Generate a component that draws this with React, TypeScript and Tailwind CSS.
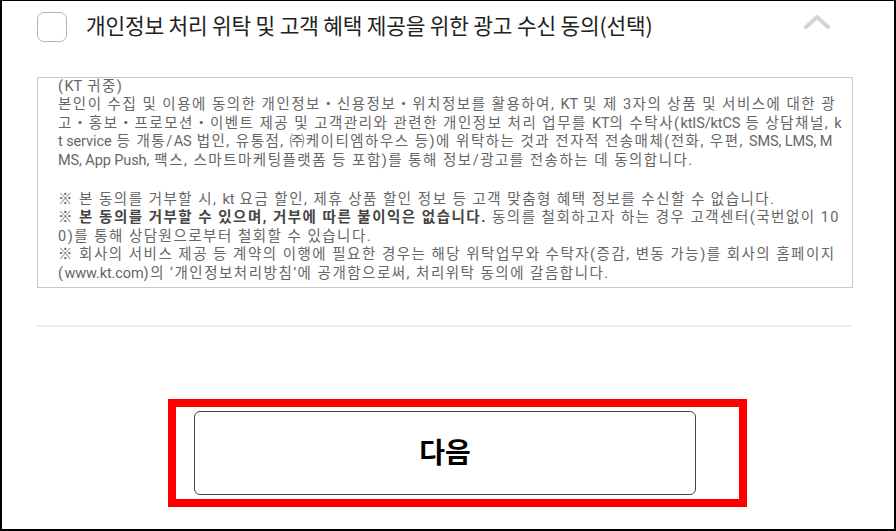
import React from 'react';

const KR = { fontFamily: '"Noto Sans CJK KR", "Noto Sans", sans-serif' };
const BODY = { fontFamily: 'Roboto, "Noto Sans CJK KR", sans-serif' };

// latin runs sit tighter than hangul in the original
function L({ children }: { children: React.ReactNode }) {
  return <span className="tracking-[-0.1px]">{children}</span>;
}

function ChevronUp() {
  return (
    <svg width="28" height="18" viewBox="0 0 28 18" className="shrink-0">
      <path d="M3 14 L14 4 L25 14" fill="none" stroke="#d4d4d4" strokeWidth="4" strokeLinecap="round" strokeLinejoin="round" />
    </svg>
  );
}

export default function App() {
  return (
    <div className="w-[896px] h-[531px] bg-white border-2 border-t border-black overflow-hidden" style={KR}>
      <div className="pl-[35px] pr-[41px]">
        {/* header */}
        <div className="flex items-center pt-[10px] h-[41px]">
          <div className="w-[30px] h-[30px] rounded-[7px] border-[1.5px] border-[#b5b5b5] shrink-0" />
          <h2 className="ml-[19px] -mt-[4px] text-[21.4px] leading-[30px] text-[#222] tracking-[-0.2px]">
            개인정보 처리 위탁 및 고객 혜택 제공을 위한 광고 수신 동의(선택)
          </h2>
          <div className="ml-auto mr-[22px] -mt-[10px]">
            <ChevronUp />
          </div>
        </div>

        {/* terms box */}
        <div className="mt-[35px] h-[211px] border border-[#c8c8c8] overflow-hidden">
          <div
            className="pl-[20px] pr-[6px] text-[14.5px] leading-[18.4px] tracking-[1.5px] text-[#666] whitespace-nowrap"
            style={BODY}
          >
            <p>(<L>KT</L> 귀중)</p>
            <p>본인이 수집 및 이용에 동의한 개인정보・신용정보・위치정보를 활용하여, <L>KT</L> 및 제 3자의 상품 및 서비스에 대한 광</p>
            <p>고・홍보・프로모션・이벤트 제공 및 고객관리와 관련한 개인정보 처리 업무를 <L>KT</L>의 수탁사(<L>ktIS/ktCS</L> 등 상담채널, <L>k</L></p>
            <p><L>t service</L> 등 개통/<L>AS</L> 법인, 유통점, ㈜케이티엠하우스 등)에 위탁하는 것과 전자적 전송매체(전화, 우편, <L>SMS, LMS, M</L></p>
            <p><L>MS, App Push,</L> 팩스, 스마트마케팅플랫폼 등 포함)를 통해 정보/광고를 전송하는 데 동의합니다.</p>
            <p className="mt-[21px]">※ 본 동의를 거부할 시, <L>kt</L> 요금 할인, 제휴 상품 할인 정보 등 고객 맞춤형 혜택 정보를 수신할 수 없습니다.</p>
            <p>
              ※ <b className="font-bold text-[#444]">본 동의를 거부할 수 있으며, 거부에 따른 불이익은 없습니다.</b> 동의를 철회하고자 하는 경우 고객센터(국번없이 10
            </p>
            <p>0)를 통해 상담원으로부터 철회할 수 있습니다.</p>
            <p>※ 회사의 서비스 제공 등 계약의 이행에 필요한 경우는 해당 위탁업무와 수탁자(증감, 변동 가능)를 회사의 홈페이지</p>
            <p>(<L>www.kt.com</L>)의 ‘개인정보처리방침’에 공개함으로써, 처리위탁 동의에 갈음합니다.</p>
          </div>
        </div>

        {/* divider */}
        <div className="mt-[37px] h-[2px] bg-[#efefef]" />

        {/* next button */}
        <div className="mt-[84px] flex justify-center">
          <div className="relative">
            <button className="w-[502px] h-[84px] pb-[5px] rounded-[6px] border border-[#444] bg-white text-[28px] font-bold text-black leading-none">
              다음
            </button>
            <div className="absolute -left-[26px] -right-[51px] -top-[12px] -bottom-[12px] border-8 border-[#ff0000] pointer-events-none" />
          </div>
        </div>
      </div>
    </div>
  );
}
